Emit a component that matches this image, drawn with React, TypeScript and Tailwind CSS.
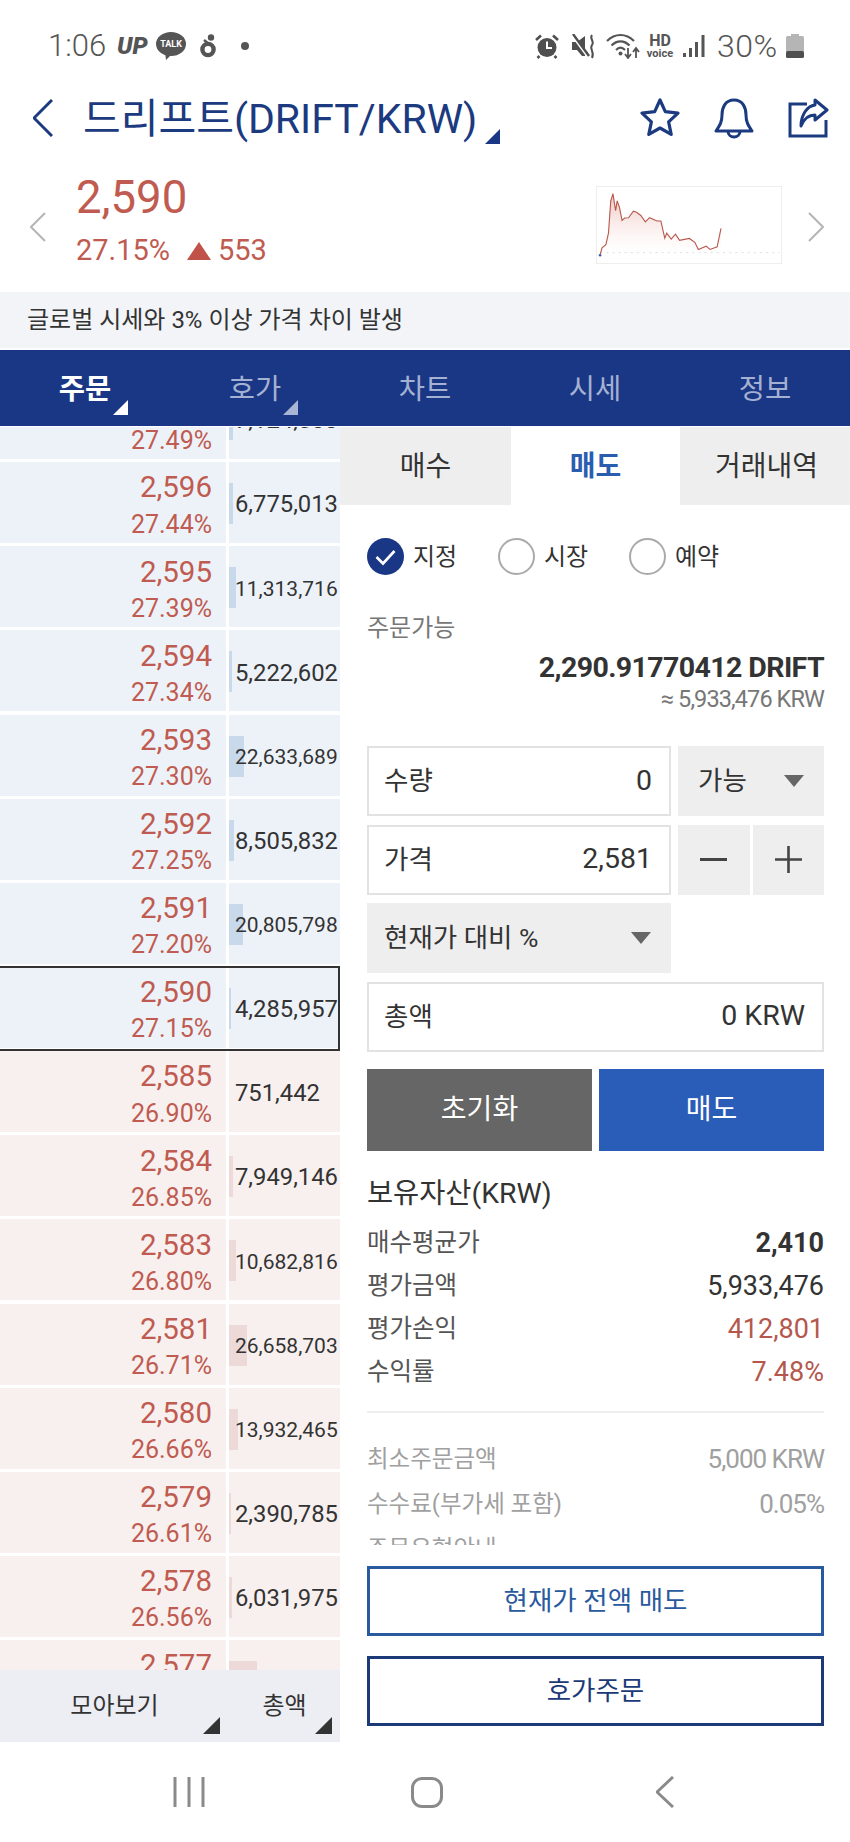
import React from 'react';

type Row = {price: string; pct: string; vol: string; bar: number; ask: boolean};

const rows: Row[] = [
  {price: '2,597', pct: '27.49%', vol: '7,124,508', bar: 4, ask: true},
  {price: '2,596', pct: '27.44%', vol: '6,775,013', bar: 4, ask: true},
  {price: '2,595', pct: '27.39%', vol: '11,313,716', bar: 7, ask: true},
  {price: '2,594', pct: '27.34%', vol: '5,222,602', bar: 3, ask: true},
  {price: '2,593', pct: '27.30%', vol: '22,633,689', bar: 15, ask: true},
  {price: '2,592', pct: '27.25%', vol: '8,505,832', bar: 5, ask: true},
  {price: '2,591', pct: '27.20%', vol: '20,805,798', bar: 14, ask: true},
  {price: '2,590', pct: '27.15%', vol: '4,285,957', bar: 2, ask: true},
  {price: '2,585', pct: '26.90%', vol: '751,442', bar: 0, ask: false},
  {price: '2,584', pct: '26.85%', vol: '7,949,146', bar: 4, ask: false},
  {price: '2,583', pct: '26.80%', vol: '10,682,816', bar: 7, ask: false},
  {price: '2,581', pct: '26.71%', vol: '26,658,703', bar: 18, ask: false},
  {price: '2,580', pct: '26.66%', vol: '13,932,465', bar: 9, ask: false},
  {price: '2,579', pct: '26.61%', vol: '2,390,785', bar: 2, ask: false},
  {price: '2,578', pct: '26.56%', vol: '6,031,975', bar: 3, ask: false},
  {price: '2,577', pct: '26.51%', vol: '41,220,310', bar: 28, ask: false},
];

const chartLine =
  '52,258 58,235 70,225 78,190 85,90 92,68 100,120 105,90 112,110 120,150 128,143 140,142 155,122 165,125 178,135 192,155 205,142 228,152 240,152 252,205 258,190 272,208 285,193 298,212 328,206 345,218 356,240 380,230 392,240 414,232 426,175';

function Corner({color, size = 15}: {color: string; size?: number}) {
  return (
    <svg width={size} height={size} viewBox="0 0 10 10" className="block">
      <polygon points="0,10 10,10 10,0" fill={color} />
    </svg>
  );
}

function Chevron({dir, color, w, h, sw}: {dir: 'l' | 'r'; color: string; w: number; h: number; sw: number}) {
  const pts = dir === 'l' ? `${w - 1},1 1,${h / 2} ${w - 1},${h - 1}` : `1,1 ${w - 1},${h / 2} 1,${h - 1}`;
  return (
    <svg width={w} height={h} viewBox={`0 0 ${w} ${h}`} className="block shrink-0">
      <polyline points={pts} fill="none" stroke={color} strokeWidth={sw} />
    </svg>
  );
}

function StatusBar() {
  return (
    <div className="flex h-[92px] items-center text-[#555]">
      <span className="ml-[48px] w-[61px] text-[31px] font-light">1:06</span>
      <span className="ml-[8px] w-[32px] text-[24px] font-black italic leading-none">UP</span>
      <div className="relative ml-[7px] h-[28px] w-[30px]">
        <svg width="30" height="28" viewBox="0 0 30 28" className="block">
          <ellipse cx="15" cy="12" rx="15" ry="12" fill="#555" />
          <polygon points="9,20 16,22 10,28" fill="#555" />
        </svg>
        <span className="absolute inset-x-0 top-[6px] text-center text-[9px] font-bold leading-[12px] text-white">TALK</span>
      </div>
      <svg width="16" height="24" viewBox="0 0 16 24" className="ml-[14px] block">
        <circle cx="11" cy="3.5" r="3.2" fill="#555" />
        <circle cx="8" cy="15.5" r="5.6" fill="none" stroke="#555" strokeWidth="4.4" />
        <path d="M4 6 L9 10" stroke="#555" strokeWidth="2.5" />
      </svg>
      <span className="ml-[25px] h-[8px] w-[8px] rounded-full bg-[#555]" />
      <div className="flex-1" />
      {/* alarm */}
      <svg width="24" height="25" viewBox="0 0 24 25" className="block">
        <circle cx="12" cy="13.5" r="9.5" fill="#4f4f4f" />
        <path d="M1 6 L6 1.5 M23 6 L18 1.5 M4.5 22 L2.5 24 M19.5 22 L21.5 24" stroke="#4f4f4f" strokeWidth="2.6" />
        <path d="M12 7.5 V14 H17" fill="none" stroke="#fff" strokeWidth="2" />
      </svg>
      {/* mute */}
      <svg width="25" height="25" viewBox="0 0 25 25" className="ml-[12px] block">
        <path d="M1 8 H6 L14 2 V22 L11 22 L6 16 H1 Z" fill="#4f4f4f" />
        <path d="M1 1 L17 23" stroke="#fff" strokeWidth="2.5" />
        <path d="M2 0 L18 22" stroke="#4f4f4f" strokeWidth="2.4" />
        <path d="M21 1 C18 5 24 7 21 11 C18 15 24 18 21 24" fill="none" stroke="#4f4f4f" strokeWidth="2" />
      </svg>
      {/* wifi */}
      <svg width="34" height="26" viewBox="0 0 34 26" className="ml-[10px] block">
        <path d="M1 8 C9 0 20 0 28 8 M5.5 12.5 C11 7 18 7 23.5 12.5 M10 17 C13 14 16 14 19 17" fill="none" stroke="#555" strokeWidth="2.2" />
        <circle cx="14.5" cy="20.5" r="2" fill="#555" />
        <path d="M22 15 V24 M19 21 L22 25 L25 21 M30 25 V16 M27 19 L30 15 L33 19" fill="none" stroke="#555" strokeWidth="1.8" />
      </svg>
      <div className="ml-[6px] flex w-[28px] flex-col items-center font-bold leading-none">
        <span className="text-[16px] leading-[15px]">HD</span>
        <span className="text-[11px] leading-[11px]">voice</span>
      </div>
      {/* signal */}
      <svg width="22" height="24" viewBox="0 0 22 24" className="ml-[9px] block">
        <rect x="0" y="19" width="3" height="4" fill="#555" />
        <rect x="6" y="14" width="3" height="9" fill="#555" />
        <rect x="12" y="8" width="3" height="15" fill="#555" />
        <rect x="18.5" y="1" width="3" height="22" fill="#555" />
      </svg>
      <span className="ml-[12px] w-[65px] text-[32px] font-light leading-none tracking-[0.5px]">30%</span>
      <svg width="18" height="24" viewBox="0 0 18 24" className="ml-[4px] mr-[46px] block">
        <rect x="5" y="0" width="8" height="3" fill="#b5b5b5" />
        <rect x="0" y="2" width="18" height="16" rx="1.5" fill="#b5b5b5" />
        <rect x="0" y="17" width="18" height="7" rx="1.5" fill="#4f4f4f" />
      </svg>
    </div>
  );
}

function TitleBar() {
  return (
    <div className="flex h-[52px] items-center text-[#1c3a80]">
      <div className="ml-[33px]">
        <Chevron dir="l" color="#1c3a80" w={20} h={38} sw={3} />
      </div>
      <span className="relative ml-[30px] mt-[3px] text-[41px] leading-none">
        드리프트(DRIFT/KRW)
        <span className="absolute left-[402px] top-[30px]">
          <Corner color="#1a3785" />
        </span>
      </span>
      <div className="flex-1" />
      <svg width="42" height="40" viewBox="0 0 40 40" className="block">
        <polygon
          points="20,2 25.3,13.7 38,15.1 28.6,23.8 31.2,36.4 20,30 8.8,36.4 11.4,23.8 2,15.1 14.7,13.7"
          fill="none"
          stroke="#1c3a80"
          strokeWidth="3.2"
          strokeLinejoin="round"
        />
      </svg>
      <svg width="42" height="41" viewBox="0 0 42 41" className="ml-[32px] block">
        <path d="M21 2 C12 2 9 10 9 17 C9 24 7 27 3 33 H39 C35 27 33 24 33 17 C33 10 30 2 21 2 Z" fill="none" stroke="#1c3a80" strokeWidth="3" strokeLinejoin="round" />
        <path d="M15 33 C15 41 27 41 27 33" fill="none" stroke="#1c3a80" strokeWidth="3" />
      </svg>
      <svg width="41" height="40" viewBox="0 0 41 40" className="ml-[33px] mr-[21px] block">
        <path d="M19 6 H2 V38 H38 V22" fill="none" stroke="#1c3a80" strokeWidth="3" />
        <path d="M27 2 L39 12 L27 22 V17 C21 17 16 20 13 28 C13 17 19 8 27 7 Z" fill="none" stroke="#1c3a80" strokeWidth="3" strokeLinejoin="round" />
      </svg>
    </div>
  );
}

function PriceBar() {
  return (
    <div className="flex h-[148px] items-start">
      <div className="ml-[30px] mt-[68px]">
        <Chevron dir="l" color="#b5b5b5" w={16} h={30} sw={2} />
      </div>
      <div className="ml-[30px] flex flex-col text-[#bf5b50]">
        <div className="mt-[34px] flex h-[40px] items-center text-[45.5px]">2,590</div>
        <div className="mt-[15px] flex h-[36px] items-center text-[29px]">
          <span className="w-[111px]">27.15%</span>
          <svg width="24" height="18" viewBox="0 0 24 18" className="block">
            <polygon points="12,0 24,18 0,18" fill="#c0524a" />
          </svg>
          <span className="ml-[7px]">553</span>
        </div>
      </div>
      <div className="flex-1" />
      <div className="mt-[42px] h-[78px] w-[186px] border border-[#eeeeee]">
        <svg width="184" height="76" viewBox="47 47 560 235" className="block">
          <defs>
            <linearGradient id="fade" x1="0" y1="0" x2="0" y2="1">
              <stop offset="0" stopColor="#eab5ae" stopOpacity="0.8" />
              <stop offset="1" stopColor="#ffffff" stopOpacity="0.2" />
            </linearGradient>
          </defs>
          <polygon points={`${chartLine} 426,250 52,250`} fill="url(#fade)" />
          <line x1="52" y1="250" x2="607" y2="250" stroke="#e0e0e0" strokeWidth="3" strokeDasharray="7 12" />
          <polyline points={chartLine} fill="none" stroke="#b9594e" strokeWidth="3.5" />
          <circle cx="52" cy="258" r="4" fill="#3a5fa8" />
        </svg>
      </div>
      <div className="ml-[26px] mr-[26px] mt-[68px]">
        <Chevron dir="r" color="#b5b5b5" w={16} h={30} sw={2} />
      </div>
    </div>
  );
}

function NavTabs() {
  const tabs = ['주문', '호가', '차트', '시세', '정보'];
  return (
    <div className="mt-[2px] flex h-[76px] bg-[#1a3785]">
      {tabs.map((t, i) => (
        <div key={t} className="flex flex-1 items-center justify-center pt-[5px]">
          <span className={`relative text-[28.5px] leading-none ${i === 0 ? 'font-bold text-white' : 'text-[#a5b1d2]'}`}>
            {t}
            {i === 0 && (
              <span className="absolute left-[54px] top-[24px]">
                <Corner color="#ffffff" />
              </span>
            )}
            {i === 1 && (
              <span className="absolute left-[54px] top-[24px]">
                <Corner color="#a9b5d6" />
              </span>
            )}
          </span>
        </div>
      ))}
    </div>
  );
}

function BookRow({row, selected}: {row: Row; selected: boolean}) {
  const bg = row.ask ? 'bg-[#edf2f9]' : 'bg-[#f8f0ef]';
  const long = row.vol.length > 9;
  return (
    <div className="relative flex h-[81px] shrink-0 gap-[3px]">
      <div className={`flex w-[226px] flex-col items-end pr-[14px] pt-[9px] text-[#bf5b50] ${bg}`}>
        <div className="flex h-[34px] items-center text-[29.5px] leading-none">{row.price}</div>
        <div className="mt-[3px] flex h-[32px] items-center text-[25px] leading-none">{row.pct}</div>
      </div>
      <div className={`relative flex flex-1 items-center pl-[6px] pt-[5px] text-[#333] ${bg}`}>
        {row.bar > 0 && (
          <div
            className={`absolute left-0 top-[21px] h-[41px] ${row.ask ? 'bg-[#c9d9ec]' : 'bg-[#eddad8]'}`}
            style={{width: row.bar}}
          />
        )}
        <span className={`relative whitespace-nowrap leading-none ${long ? 'text-[21px]' : 'text-[23.8px]'}`}>{row.vol}</span>
      </div>
      {selected && <div className="absolute inset-x-0 bottom-[-3px] top-[-1px] border-y-2 border-r-2 border-[#333]" />}
    </div>
  );
}

function OrderBook() {
  return (
    <div className="flex w-[340px] flex-col">
      <div className="min-h-0 flex-1 overflow-hidden">
        <div className="mt-[-49px] flex flex-col gap-[3.15px]">
          {rows.map((r) => (
            <BookRow key={r.price} row={r} selected={r.price === '2,590'} />
          ))}
        </div>
      </div>
      <div className="flex h-[72px] shrink-0 bg-[#eceef3] text-[24px] text-[#333]">
        <div className="relative flex w-[229px] items-center justify-center">
          모아보기
          <span className="absolute bottom-[8px] right-[9px]">
            <Corner color="#333333" size={17} />
          </span>
        </div>
        <div className="relative flex flex-1 items-center justify-center">
          총액
          <span className="absolute bottom-[8px] right-[8px]">
            <Corner color="#333333" size={17} />
          </span>
        </div>
      </div>
    </div>
  );
}

function Radio({label, on}: {label: string; on?: boolean}) {
  return (
    <div className="flex w-[131px] items-center">
      {on ? (
        <svg width="37" height="37" viewBox="0 0 37 37" className="block">
          <circle cx="18.5" cy="18.5" r="18.5" fill="#1a3785" />
          <polyline points="9.5,19 16,25.5 27.5,13" fill="none" stroke="#fff" strokeWidth="2.6" />
        </svg>
      ) : (
        <div className="h-[37px] w-[37px] rounded-full border-2 border-[#aaaaaa] bg-white" />
      )}
      <span className="ml-[9px] text-[24px] leading-none text-[#333]">{label}</span>
    </div>
  );
}

function Field({label, value}: {label: string; value: string}) {
  return (
    <div className="flex h-[70px] items-center justify-between border-2 border-[#e2e2e2] bg-white pl-[15px] pr-[17px] text-[#333]">
      <span className="text-[26.5px]">{label}</span>
      <span className="text-[28.5px]">{value}</span>
    </div>
  );
}

function Caret() {
  return (
    <svg width="20" height="12" viewBox="0 0 20 12" className="block">
      <polygon points="0,0 20,0 10,12" fill="#666" />
    </svg>
  );
}

function InfoRow({label, value, cls}: {label: string; value: string; cls: string}) {
  return (
    <div className="flex h-[43px] items-center justify-between">
      <span className="text-[24.5px] text-[#555]">{label}</span>
      <span className={`text-[27px] ${cls}`}>{value}</span>
    </div>
  );
}

function OrderForm() {
  return (
    <div className="flex flex-1 flex-col">
      <div className="flex h-[78px] shrink-0 pt-[2px] text-[28px] text-[#333]">
        <div className="-mt-[2px] flex w-[171px] items-center justify-center bg-[#eeeeee] pt-[2px]">매수</div>
        <div className="-mt-[2px] flex w-[169px] items-center justify-center pt-[2px] font-bold text-[#2a5db0]">매도</div>
        <div className="-mt-[2px] flex flex-1 items-center justify-center bg-[#eeeeee] pl-[3px] pt-[2px]">거래내역</div>
      </div>
      <div className="min-h-0 flex-1 overflow-hidden pl-[27px] pr-[26px]">
        <div className="mt-[33px] flex h-[37px]">
          <Radio label="지정" on />
          <Radio label="시장" />
          <Radio label="예약" />
        </div>
        <div className="mt-[38px] flex h-[30px] items-center text-[24px] text-[#777]">주문가능</div>
        <div className="mt-[8px] flex h-[34px] items-center justify-end text-[28.5px] font-bold tracking-[-0.6px] text-[#333]">
          2,290.91770412 DRIFT
        </div>
        <div className="mt-[1px] flex h-[28px] items-center justify-end text-[23.5px] tracking-[-0.9px] text-[#777]">
          ≈ 5,933,476 KRW
        </div>
        <div className="mt-[32px] grid grid-cols-[304px_1fr] gap-x-[7px] gap-y-[8.5px]">
          <Field label="수량" value="0" />
          <div className="flex h-[70px] items-center justify-between bg-[#eeeeee] pl-[20px] pr-[20px] text-[26.5px] text-[#333]">
            <span>가능</span>
            <Caret />
          </div>
          <Field label="가격" value="2,581" />
          <div className="flex h-[70px] gap-[3px]">
            <div className="flex flex-1 items-center justify-center bg-[#eeeeee]">
              <div className="h-[3px] w-[27px] bg-[#444]" />
            </div>
            <div className="relative flex flex-1 items-center justify-center bg-[#eeeeee]">
              <svg width="27" height="27" viewBox="0 0 27 27" className="block">
                <path d="M0 13.5 H27 M13.5 0 V27" stroke="#444" strokeWidth="2.6" />
              </svg>
            </div>
          </div>
          <div className="flex h-[70px] items-center justify-between bg-[#eeeeee] pl-[17px] pr-[20px] text-[26.5px] text-[#333]">
            <span>현재가 대비 %</span>
            <Caret />
          </div>
          <div />
          <div className="col-span-2">
            <Field label="총액" value="0 KRW" />
          </div>
        </div>
        <div className="mt-[17.5px] flex h-[82px] gap-[7px] text-[28px] text-white">
          <div className="flex flex-1 items-center justify-center bg-[#666666]">초기화</div>
          <div className="flex flex-1 items-center justify-center bg-[#2a5db8]">매도</div>
        </div>
        <div className="mt-[25px] flex h-[36px] items-center text-[28.4px] text-[#333]">보유자산(KRW)</div>
        <div className="mt-[10px]">
          <InfoRow label="매수평균가" value="2,410" cls="font-bold text-[#333]" />
          <InfoRow label="평가금액" value="5,933,476" cls="text-[#333]" />
          <InfoRow label="평가손익" value="412,801" cls="text-[#b5574d]" />
          <InfoRow label="수익률" value="7.48%" cls="text-[#b5574d]" />
        </div>
        <div className="mt-[17px] h-[2px] bg-[#eeeeee]" />
        <div className="mt-[24px] text-[#a0a0a0]">
          <div className="flex h-[45px] items-center justify-between">
            <span className="text-[23.5px]">최소주문금액</span>
            <span className="text-[26px] tracking-[-1px]">5,000 KRW</span>
          </div>
          <div className="flex h-[45px] items-center justify-between">
            <span className="text-[23.5px]">수수료(부가세 포함)</span>
            <span className="text-[26px] tracking-[-1px]">0.05%</span>
          </div>
          <div className="flex h-[45px] items-center justify-between">
            <span className="text-[23.5px]">주문유형안내</span>
          </div>
        </div>
      </div>
      <div className="flex shrink-0 flex-col gap-[20px] pb-[16px] pl-[27px] pr-[26px] pt-[21px] text-[26.5px]">
        <div className="flex h-[70px] items-center justify-center border-[3px] border-[#2a5a9e] text-[#2a5a9e]">현재가 전액 매도</div>
        <div className="flex h-[70px] items-center justify-center border-[3px] border-[#1c3a78] text-[#1c3a78]">호가주문</div>
      </div>
    </div>
  );
}

function SystemNav() {
  return (
    <div className="flex h-[100px] items-center justify-center pl-[3px]">
      <div className="flex w-[238px] justify-center">
        <svg width="32" height="30" viewBox="0 0 32 30" className="block">
          <path d="M2 0 V30 M16 0 V30 M30 0 V30" stroke="#8a8a8a" strokeWidth="3" />
        </svg>
      </div>
      <div className="flex w-[238px] justify-center">
        <div className="h-[31px] w-[32px] rounded-[11px] border-[3px] border-[#8a8a8a]" />
      </div>
      <div className="flex w-[238px] justify-center">
        <Chevron dir="l" color="#8a8a8a" w={18} h={32} sw={3} />
      </div>
    </div>
  );
}

export default function App() {
  return (
    <div className="flex h-[1842px] w-[850px] flex-col overflow-hidden bg-white font-['Roboto','Noto_Sans_CJK_KR',sans-serif]">
      <StatusBar />
      <TitleBar />
      <PriceBar />
      <div className="flex h-[56px] items-center bg-[#f2f4f8] pl-[27px] text-[24px] text-[#333]">글로벌 시세와 3% 이상 가격 차이 발생</div>
      <NavTabs />
      <div className="mt-[1px] flex min-h-0 flex-1">
        <OrderBook />
        <OrderForm />
      </div>
      <SystemNav />
    </div>
  );
}
